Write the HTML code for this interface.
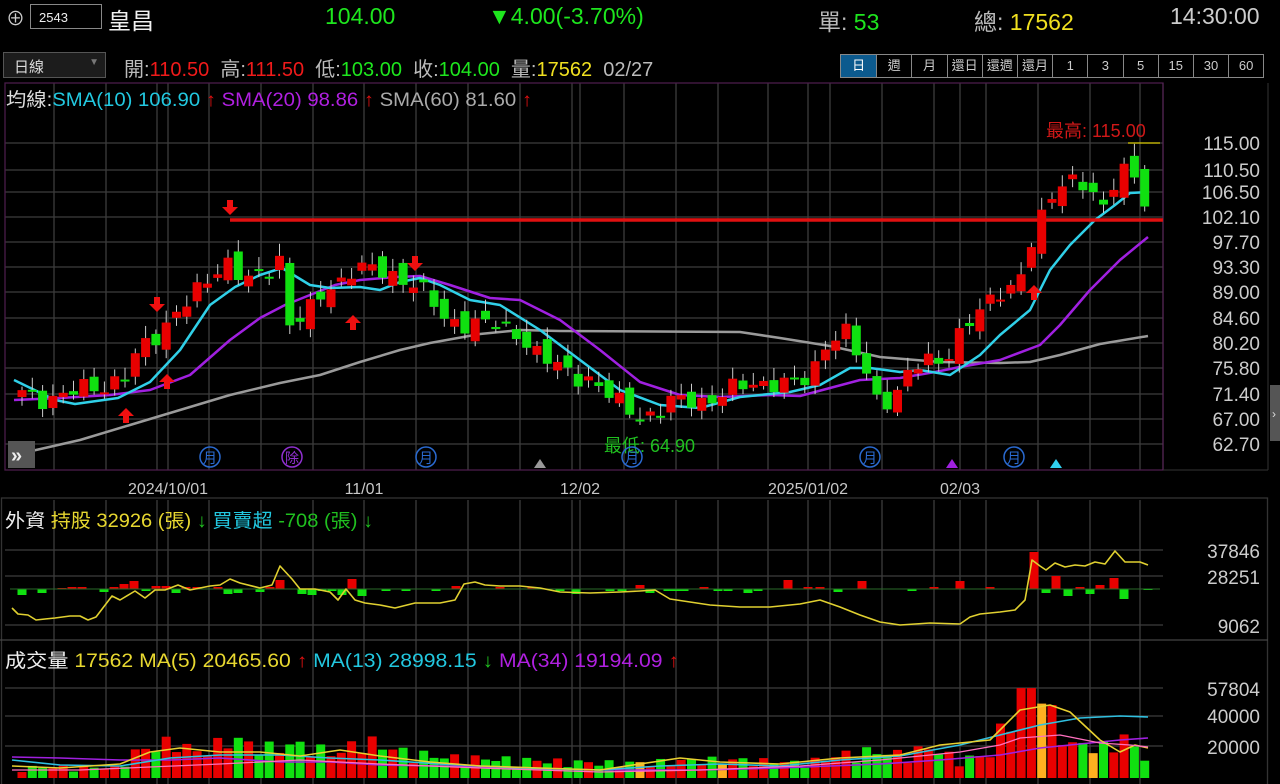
<!DOCTYPE html>
<html><head><meta charset="utf-8">
<style>
*{margin:0;padding:0;box-sizing:border-box}
body{width:1280px;height:784px;background:#000;overflow:hidden;font-family:"Liberation Sans","Noto Sans CJK TC",sans-serif;color:#ddd;position:relative}
.t{position:absolute;white-space:nowrap}
.btns{position:absolute;left:840px;top:54px;display:flex;border:1px solid #888}
.btns div{width:35.2px;height:22px;border-left:1px solid #888;font-size:13px;color:#ccc;text-align:center;line-height:21px}
.btns div:first-child{border-left:none;background:#0c5a8e;color:#fff}
</style></head><body>
<div class="t" style="left:6px;top:4px;font-size:19px;color:#ccc">⊕</div>
<div class="t" style="left:30px;top:4px;width:72px;height:25px;border:1px solid #888;font-size:13px;color:#eee;padding:5px 0 0 8px">2543</div>
<div class="t" style="left:108px;top:2px;font-size:23px;color:#f2f2f2">皇昌</div>
<div class="t" style="left:325px;top:3px;font-size:23px;color:#1ee61e">104.00</div>
<div class="t" style="left:488px;top:3px;font-size:23px;color:#1ee61e">▼4.00(-3.70%)</div>
<div class="t" style="left:818px;top:3px;font-size:23px;color:#bbb">單: <span style="color:#1ee61e">53</span></div>
<div class="t" style="left:974px;top:3px;font-size:23px;color:#bbb">總: <span style="color:#f0e020">17562</span></div>
<div class="t" style="left:1170px;top:3px;font-size:23px;color:#ccc">14:30:00</div>

<div class="t" style="left:3px;top:52px;width:103px;height:26px;border:1px solid #555;background:#1c1c1c;font-size:15px;color:#ddd;padding:3px 0 0 10px">日線<span style="position:absolute;right:6px;top:4px;font-size:10px;color:#777">▼</span></div>
<div class="t" style="left:124px;top:53px;font-size:20px;color:#bbb">開:<span style="color:#f01a1a">110.50</span>&nbsp; 高:<span style="color:#f01a1a">111.50</span>&nbsp; 低:<span style="color:#1ee61e">103.00</span>&nbsp; 收:<span style="color:#1ee61e">104.00</span>&nbsp; 量:<span style="color:#f0e020">17562</span>&nbsp; 02/27</div>
<div class="btns"><div>日</div><div>週</div><div>月</div><div>還日</div><div>還週</div><div>還月</div><div>1</div><div>3</div><div>5</div><div>15</div><div>30</div><div>60</div></div>

<svg id="s" width="1280" height="784" style="position:absolute;left:0;top:0" font-family="Liberation Sans, Noto Sans CJK TC, sans-serif">
<g id="grid" stroke="#3c3c3c" stroke-width="1.3"></g>
<rect x="5" y="83" width="1158" height="387" fill="none" stroke="#4a1d4a" stroke-width="1.3"/>
<line x1="1163" y1="83" x2="1163" y2="470" stroke="#5a2a5a"/>
<rect x="1.5" y="498" width="1266" height="290" fill="none" stroke="#333" stroke-width="1.3"/>
<line x1="0" y1="640" x2="1268" y2="640" stroke="#444" stroke-width="1.3"/>
<line x1="1268" y1="83" x2="1268" y2="470" stroke="#333"/>
<line x1="1163" y1="470" x2="1268" y2="470" stroke="#333"/>
<rect x="1270" y="385" width="10" height="56" fill="#555"/>
<text x="1272" y="418" font-size="12" fill="#ddd">›</text>
<g id="ma"></g>
<line x1="230" y1="220" x2="1163" y2="220" stroke="#e01010" stroke-width="3.5"/>
<line x1="1128" y1="143" x2="1160" y2="143" stroke="#d8c800" stroke-width="1.3"/>
<g id="c"></g>
<g id="arr" fill="#f01010"></g>
<g font-size="19" fill="#ccc" text-anchor="end">
<text x="1260" y="150">115.00</text><text x="1260" y="177">110.50</text><text x="1260" y="199">106.50</text><text x="1260" y="224">102.10</text><text x="1260" y="249">97.70</text><text x="1260" y="274">93.30</text><text x="1260" y="299">89.00</text><text x="1260" y="325">84.60</text><text x="1260" y="350">80.20</text><text x="1260" y="375">75.80</text><text x="1260" y="401">71.40</text><text x="1260" y="426">67.00</text><text x="1260" y="451">62.70</text>
<text x="1260" y="558">37846</text><text x="1260" y="584">28251</text><text x="1260" y="633">9062</text>
<text x="1260" y="696">57804</text><text x="1260" y="723">40000</text><text x="1260" y="754">20000</text>
</g>
<g font-size="16" fill="#c8c8c8" text-anchor="middle">
<text x="168" y="494">2024/10/01</text><text x="364" y="494">11/01</text><text x="580" y="494">12/02</text><text x="808" y="494">2025/01/02</text><text x="960" y="494">02/03</text>
</g>
<text x="1046" y="137" font-size="18" fill="#d01818">最高: 115.00</text>
<text x="604" y="452" font-size="18" fill="#20c020">最低: 64.90</text>
<g id="icons"></g>
<rect x="8" y="441" width="27" height="27" fill="#555"/>
<text x="11" y="462" font-size="20" fill="#eee" font-weight="bold">»</text>
<polygon points="534,468 540,459 546,468" fill="#999"/>
<polygon points="946,468 952,459 958,468" fill="#a020e0"/>
<polygon points="1050,468 1056,459 1062,468" fill="#30d0f0"/>
<text x="6" y="106" font-size="19" fill="#ddd" textLength="526" lengthAdjust="spacingAndGlyphs">均線:<tspan fill="#22c8e0">SMA(10) 106.90 </tspan><tspan fill="#e01010">↑</tspan><tspan fill="#b020e0">  SMA(20) 98.86 </tspan><tspan fill="#e01010">↑</tspan><tspan fill="#aaa">  SMA(60) 81.60 </tspan><tspan fill="#e01010">↑</tspan></text>
<text x="5" y="527" font-size="19" fill="#eee" textLength="368" lengthAdjust="spacingAndGlyphs">外資 <tspan fill="#e8d830">持股 32926 (張)</tspan><tspan fill="#20c020"> ↓ </tspan><tspan fill="#22c8e0"> 買賣超 </tspan><tspan fill="#20c020">-708 (張) ↓</tspan></text>
<text x="5" y="667" font-size="19" fill="#eee" textLength="674" lengthAdjust="spacingAndGlyphs">成交量 <tspan fill="#e8d830">  17562   MA(5) 20465.60 </tspan><tspan fill="#e01010">↑ </tspan><tspan fill="#22c8e0">MA(13) 28998.15 </tspan><tspan fill="#20c020">↓ </tspan><tspan fill="#b020e0">MA(34) 19194.09 </tspan><tspan fill="#e01010">↑</tspan></text>
<g id="f"></g>
<g id="v"></g>
</svg>
<script>
var NS="http://www.w3.org/2000/svg";
function el(p,t,a){var e=document.createElementNS(NS,t);for(var k in a)e.setAttribute(k,a[k]);document.getElementById(p).appendChild(e);return e;}
var hy=[143,170,192,217,242,267,292,318,343,368,394,419,444];
hy.forEach(function(y){el("grid","line",{x1:5,y1:y,x2:1163,y2:y});});
[550,576,625].forEach(function(y){el("grid","line",{x1:5,y1:y,x2:1163,y2:y});});
[688,716,746].forEach(function(y){el("grid","line",{x1:5,y1:y,x2:1163,y2:y});});
var vx=[54,106,157,168,209,261,313,364,416,468,520,572,580,624,676,718,768,808,830,882,934,960,986,1038,1090,1140];
vx.forEach(function(x){el("grid","line",{x1:x,y1:83,x2:x,y2:470});el("grid","line",{x1:x,y1:500,x2:x,y2:784});});
function Y(p){return 143+(115-p)*5.774;}
function interp(k,x){for(var i=0;i<k.length-1;i++){if(x<=k[i+1][0]){var t=(x-k[i][0])/(k[i+1][0]-k[i][0]);return k[i][1]+t*(k[i+1][1]-k[i][1]);}}return k[k.length-1][1];}
var kp=[[22,71.5],[40,70.5],[70,72],[100,72.5],[125,75],[140,79],[160,82],[175,86],[195,88.5],[218,93],[230,95],[245,91],[265,92],[280,95],[290,84],[310,86],[325,89],[340,91],[355,94],[370,93],[390,92],[415,91],[430,88],[445,84],[460,84],[480,84],[500,83],[520,82],[540,78],[560,76],[590,74],[610,71],[640,68],[655,67.5],[670,70],[690,71],[710,70],[730,72],[750,74],[770,73],[790,73],[810,75],[825,80],[845,82],[860,78],[880,70],[900,71],[910,76],[930,78],[950,78],[965,83],[980,86],[995,90],[1010,89],[1020,91],[1034,99],[1045,104],[1055,108],[1066,108],[1076,108],[1087,107],[1097,105],[1107,104],[1117,111],[1128,110],[1138,108],[1148,104]];
var vk=[[22,7],[120,7],[130,16],[160,22],[175,25],[200,16],[230,27],[260,20],[300,22],[340,16],[360,26],[400,18],[440,14],[480,13],[520,12],[560,11],[600,10],[640,10],[700,12],[740,12],[800,10],[820,12],[860,18],[900,16],[930,20],[960,12],[990,16],[1020,58],[1035,55],[1045,48],[1055,38],[1070,22],[1090,22],[1110,20],[1125,28],[1140,14],[1148,17.5]];
var N=110,prev=71;
for(var i=0;i<N;i++){
 var x=22+i*10.3;
 var c=interp(kp,x)+1.3*Math.sin(i*2.3)+0.7*Math.cos(i*1.1);
 var o=prev+1.4*Math.sin(i*3.1);
 if(i==N-1){o=110.5;c=104;}
 var hi=Math.max(o,c)+0.6+1.5*Math.abs(Math.sin(i*1.7));
 var lo=Math.min(o,c)-0.5-1.0*Math.abs(Math.cos(i*2.9));
 var up=c>=o,col=up?"#e80000":"#10e010";
 el("c","line",{x1:x,y1:Y(hi),x2:x,y2:Y(lo),stroke:"#ccc","stroke-width":1});
 var yt=Y(Math.max(o,c)),h=Math.max(2,Y(Math.min(o,c))-yt);
 el("c","rect",{x:x-4.5,y:yt,width:9,height:h,fill:col});
 var vol=Math.max(3,interp(vk,x)*(0.55+0.6*Math.abs(Math.sin(i*1.9))));
 var vc=col;if([60,68,104].indexOf(i)>=0)vc="#ffb020";
 if(Math.abs(x-1045)<5){vc="#ffb020";vol=48;}
 if(Math.abs(x-1024)<5||Math.abs(x-1034)<5)vol=58;
 var vh=vol*1.55;
 el("v","rect",{x:x-4.5,y:778-vh,width:9,height:vh,fill:vc});
 prev=c;
}
function pl(g,pts,col,w){el(g,"polyline",{points:pts.map(function(p){return p.join(",")}).join(" "),fill:"none",stroke:col,"stroke-width":w,"stroke-linejoin":"round"});}
pl("ma",[[14,455],[80,440],[130,425],[180,410],[230,395],[280,383],[320,375],[360,362],[400,350],[430,343],[480,334],[520,330],[560,331],[740,332],[780,338],[830,346],[880,357],[940,362],[1000,363],[1030,362],[1060,355],[1100,344],[1148,336]],"#9a9a9a",2.5);
pl("ma",[[14,400],[60,398],[110,395],[150,390],[190,375],[230,340],[260,318],[285,305],[310,295],[335,285],[360,280],[395,277],[420,276],[450,285],[490,298],[520,300],[560,320],[600,350],[640,382],[680,395],[720,397],[770,395],[800,396],[830,388],[860,380],[900,378],[935,372],[960,367],[1000,360],[1040,345],[1060,325],[1090,290],[1120,260],[1148,237]],"#a020e0",2.5);
pl("ma",[[14,380],[55,400],[75,404],[118,398],[150,382],[180,350],[210,305],[235,287],[260,275],[282,268],[310,285],[330,288],[360,287],[380,290],[400,282],[420,278],[440,285],[470,300],[500,305],[540,330],[580,360],[620,390],[660,405],[700,408],[740,397],[790,392],[820,385],[850,368],[870,368],[900,372],[920,370],[950,375],[980,355],[1000,335],[1030,310],[1050,270],[1070,245],[1095,220],[1115,205],[1130,193],[1148,192]],"#30d0e8",2.5);
function arr(x,y,d){var s=d;el("arr","polygon",{points:[x-3,y-8*s,x+3,y-8*s,x+3,y-1*s,x+8,y-1*s,x,y+7*s,x-8,y-1*s,x-3,y-1*s].join(",")});}
arr(230,208,1);arr(157,305,1);arr(415,264,1);arr(126,415,-1);arr(167,381,-1);arr(353,322,-1);arr(1034,292,-1);
[[210,"#2a6ad0","月"],[292,"#9030d0","除"],[426,"#2a6ad0","月"],[632,"#2a6ad0","月"],[870,"#2a6ad0","月"],[1014,"#2a6ad0","月"]].forEach(function(a){
 el("icons","circle",{cx:a[0],cy:457,r:10,fill:"none",stroke:a[1],"stroke-width":1.5});
 var t=el("icons","text",{x:a[0],y:463,"font-size":14,fill:a[1],"text-anchor":"middle"});t.textContent=a[2];});
var fb=[[22,-6],[42,-4],[62,1],[72,2],[82,2],[104,-3],[114,2],[124,5],[134,8],[146,-2],[156,3],[166,3],[176,-4],[186,2],[197,2],[218,2],[228,-5],[238,-4],[260,-3],[270,2],[280,9],[302,-5],[312,-6],[322,-2],[332,-2],[342,-6],[352,10],[362,-7],[386,-2],[406,-2],[436,-2],[456,3],[500,2],[532,2],[560,-2],[576,-5],[610,-2],[622,-2],[640,4],[650,-4],[668,-2],[676,-2],[684,-2],[704,2],[718,-2],[728,-2],[748,-4],[758,-2],[788,9],[808,2],[820,2],[838,-3],[862,8],[912,-2],[934,2],[960,8],[990,2],[1034,37],[1046,-4],[1056,13],[1068,-7],[1080,2],[1090,-5],[1100,4],[1114,11],[1124,-10],[1148,-1]];
fb.forEach(function(b){var h=b[1];el("f","rect",{x:b[0]-4.5,y:h>0?589-h:589,width:9,height:Math.abs(h),fill:h>0?"#e80000":"#10e010"});});
el("f","line",{x1:10,y1:589,x2:1160,y2:589,stroke:"#2a6a2a","stroke-width":1});
pl("f",[[12,608],[18,614],[28,615],[36,620],[45,619],[55,618],[70,616],[80,616],[88,620],[96,617],[112,596],[120,600],[135,591],[145,598],[155,590],[165,590],[178,585],[190,590],[210,586],[220,585],[230,579],[240,583],[260,588],[272,585],[280,566],[292,579],[300,589],[315,589],[330,592],[338,600],[346,589],[355,600],[365,603],[380,605],[395,608],[415,603],[440,603],[455,600],[464,584],[475,582],[485,585],[500,586],[520,586],[540,588],[560,592],[590,593],[620,592],[640,591],[655,590],[670,599],[690,602],[710,605],[740,607],[770,607],[800,604],[820,600],[840,607],[860,615],[880,622],[900,625],[930,623],[960,624],[970,617],[980,614],[1000,612],[1015,610],[1025,600],[1032,560],[1040,566],[1046,570],[1055,563],[1065,567],[1075,565],[1085,566],[1095,562],[1105,564],[1115,551],[1125,562],[1140,562],[1148,565]],"#e0d030",1.6);
pl("v",[[12,757],[60,758],[120,760],[170,760],[220,758],[280,762],[330,762],[380,765],[440,766],[520,768],[600,770],[700,770],[780,768],[830,766],[880,764],[940,760],[1000,755],[1040,748],[1080,744],[1120,740],[1148,738]],"#a020e0",1.6);
pl("v",[[12,760],[60,765],[120,766],[170,758],[220,755],[280,755],[330,758],[380,760],[440,764],[520,768],[600,770],[660,766],[720,764],[780,766],[840,760],[900,756],[960,745],[1000,735],[1040,725],[1080,718],[1120,716],[1148,717]],"#30c0e0",1.6);
pl("v",[[12,766],[60,768],[120,764],[150,752],[180,748],[220,752],[260,752],[300,756],[340,750],[380,756],[430,762],[480,766],[540,768],[600,770],[640,764],[680,758],[720,762],[780,764],[840,758],[900,755],[940,745],[990,740],[1020,710],[1050,705],[1070,712],[1100,740],[1120,752],[1135,745],[1148,748]],"#e8d030",1.6);
pl("v",[[12,770],[80,770],[150,767],[220,764],[300,760],[380,764],[480,768],[600,772],[700,770],[800,766],[880,760],[960,752],[1000,745],[1020,738],[1060,735],[1100,743],[1130,745],[1148,747]],"#ff70c0",1.3);
</script>
</body></html>
